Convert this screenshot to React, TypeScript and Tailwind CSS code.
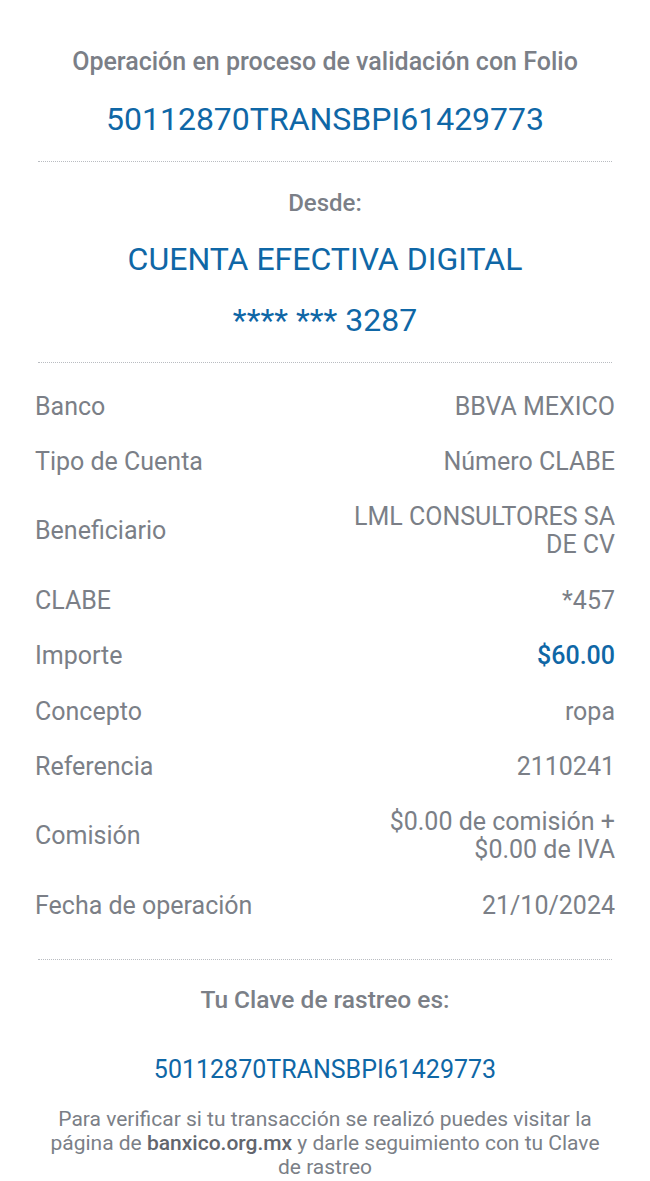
const rows: { label: string; value: string[]; blue?: boolean }[] = [
  { label: "Banco", value: ["BBVA MEXICO"] },
  { label: "Tipo de Cuenta", value: ["Número CLABE"] },
  { label: "Beneficiario", value: ["LML CONSULTORES SA", "DE CV"] },
  { label: "CLABE", value: ["*457"] },
  { label: "Importe", value: ["$60.00"], blue: true },
  { label: "Concepto", value: ["ropa"] },
  { label: "Referencia", value: ["2110241"] },
  { label: "Comisión", value: ["$0.00 de comisión +", "$0.00 de IVA"] },
  { label: "Fecha de operación", value: ["21/10/2024"] },
];

function Divider() {
  return <div className="mx-[38px] border-t border-dotted border-[#b9bcc1]" />;
}

export default function App() {
  return (
    <div className="min-h-[1181px] w-[650px] bg-white font-['Roboto',sans-serif] text-[#7b7f87]">
      <div className="flex flex-col items-center pt-[46px] pb-[24px]">
        <p className="text-[25px] leading-[32px] font-medium">Operación en proceso de validación con Folio</p>
        <p className="mt-[24px] text-[32px] leading-[35px] text-[#0f67a6]">50112870TRANSBPI61429773</p>
      </div>
      <Divider />
      <div className="flex flex-col items-center pt-[25px] pb-[24px]">
        <p className="text-[24px] leading-[32px] font-medium">Desde:</p>
        <p className="mt-[23px] text-[32px] leading-[35px] text-[#0f67a6]">CUENTA EFECTIVA DIGITAL</p>
        <p className="mt-[26px] text-[32px] leading-[35px] text-[#0f67a6]">**** *** 3287</p>
      </div>
      <Divider />
      <div className="px-[35px] pt-[16px] pb-[26px]">
        {rows.map((r) => (
          <div key={r.label} className="flex items-center justify-between py-[13.7px] text-[25px] leading-[28px]">
            <span>{r.label}</span>
            <span className={"max-w-[290px] text-right " + (r.blue ? "font-medium text-[#0f67a6]" : "")}>
              {r.value.map((v) => (
                <span key={v} className="block">{v}</span>
              ))}
            </span>
          </div>
        ))}
      </div>
      <Divider />
      <div className="flex flex-col items-center px-[46px] pt-[25px] text-center">
        <p className="text-[24.5px] leading-[30px] font-medium">Tu Clave de rastreo es:</p>
        <p className="mt-[40px] text-[25px] leading-[30px] text-[#0f67a6]">50112870TRANSBPI61429773</p>
        <p className="mt-[22px] text-[21px] leading-[24px]">
          Para verificar si tu transacción se realizó puedes visitar la página de{" "}
          <span className="font-medium text-[#62666d]">banxico.org.mx</span> y darle seguimiento con tu Clave de rastreo
        </p>
      </div>
    </div>
  );
}
